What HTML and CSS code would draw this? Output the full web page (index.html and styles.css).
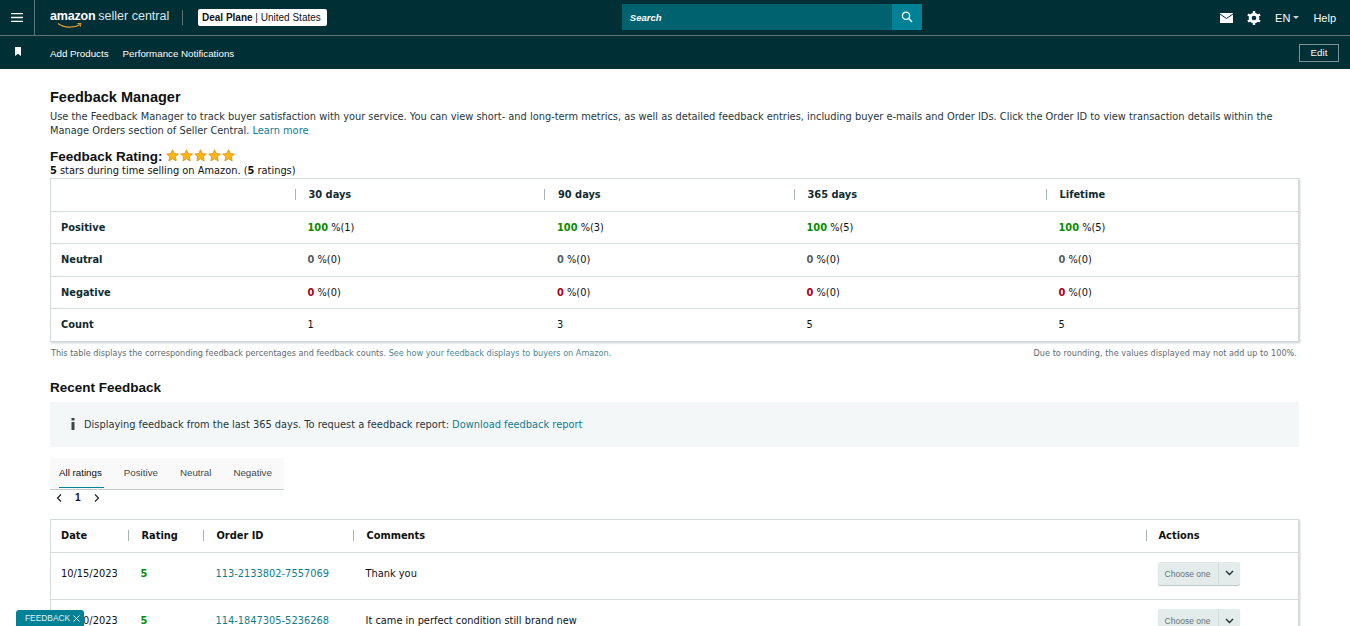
FILE: index.html
```html
<!DOCTYPE html>
<html lang="en">
<head>
    <meta charset="UTF-8">
    <meta name="viewport" content="width=device-width, initial-scale=1.0">
    <title>Feedback Manager</title>
    <link rel="stylesheet" href="styles.css">
</head>
<body>
    <svg class="defs" width="0" height="0">
        <symbol id="star" viewBox="0 0 14 14"><path d="M7 .8l1.900 4.100 4.500.5-3.300 3 .9 4.400L7 10.600l-3.900 2.200.9-4.400-3.300-3 4.500-.5z" fill="#fdb515" stroke="#d98a0c" stroke-width=".8"/></symbol>
        <symbol id="chev" viewBox="0 0 9 6"><path d="M1 1l3.500 3.500L8 1" fill="none" stroke="#1c3036" stroke-width="1.400"/></symbol>
    </svg>
    <header class="topbar">
        <div class="menu-cell">
            <svg width="12" height="9" viewBox="0 0 12 9"><path d="M0 .7h12M0 4.500h12M0 8.300h12" stroke="#fff" stroke-width="1.300"/></svg>
        </div>
        <div class="logo">
            <span class="logo-amazon">amazon</span><span class="logo-rest">seller central</span>
            <svg class="logo-smile" width="26" height="7" viewBox="0 0 26 7"><path d="M1 1.500C7 6 17 6.500 23 2.500" fill="none" stroke="#e79b2d" stroke-width="1.300"/><path d="M20.500 1.500l3.500 0-.8 3.300" fill="none" stroke="#e79b2d" stroke-width="1"/></svg>
        </div>
        <div class="logo-sep"></div>
        <div class="account"><b>Deal Plane</b> | United States</div>
        <div class="search">
            <span class="search-label">Search</span>
            <span class="search-btn">
                <svg width="12" height="12" viewBox="0 0 12 12"><circle cx="5" cy="4.800" r="3.600" fill="none" stroke="#fff" stroke-width="1.300"/><path d="M7.700 7.500L11 11" stroke="#fff" stroke-width="1.500"/></svg>
            </span>
        </div>
        <div class="top-right">
            <svg width="13" height="10" viewBox="0 0 13 10"><path d="M0 0h13v10H0z" fill="#fff"/><path d="M0 1l6.500 4.500L13 1" fill="none" stroke="#002f36" stroke-width="1"/></svg>
            <svg width="14" height="14" viewBox="0 0 14 14"><circle cx="7" cy="7" r="3.800" fill="none" stroke="#fff" stroke-width="3"/><path d="M7 0v14M.9 3.500l12.200 7M.9 10.500l12.200-7" stroke="#fff" stroke-width="2.400" stroke-dasharray="2.500 9 2.500"/></svg>
            <span class="lang">EN <i class="caret"></i></span>
            <span class="help">Help</span>
        </div>
    </header>
    <nav class="subbar">
        <svg class="bookmark" width="6" height="9" viewBox="0 0 6 9"><path d="M0 0h6v9L3 6.800 0 9z" fill="#fff"/></svg>
        <a>Add Products</a>
        <a>Performance Notifications</a>
        <button class="edit">Edit</button>
    </nav>

    <main class="content">
        <h1>Feedback Manager</h1>
        <p class="intro">Use the Feedback Manager to track buyer satisfaction with your service. You can view short- and long-term metrics, as well as detailed feedback entries, including buyer e-mails and Order IDs. Click the Order ID to view transaction details within the Manage Orders section of Seller Central. <a>Learn more</a></p>

        <div class="rating-head">
            <h2>Feedback Rating:</h2>
            <span class="stars">
                <svg><use href="#star"/></svg><svg><use href="#star"/></svg><svg><use href="#star"/></svg><svg><use href="#star"/></svg><svg><use href="#star"/></svg>
            </span>
        </div>
        <p class="rating-sub"><b>5</b> stars during time selling on Amazon. (<b>5</b> ratings)</p>

        <table class="metrics">
            <colgroup>
                <col class="c-label"><col class="c-30"><col class="c-90"><col class="c-365"><col>
            </colgroup>
            <thead>
                <tr>
                    <th></th>
                    <th><span class="th-sep">30 days</span></th>
                    <th><span class="th-sep">90 days</span></th>
                    <th><span class="th-sep">365 days</span></th>
                    <th><span class="th-sep">Lifetime</span></th>
                </tr>
            </thead>
            <tbody>
                <tr>
                    <th>Positive</th>
                    <td><b class="green">100</b> %(1)</td>
                    <td><b class="green">100</b> %(3)</td>
                    <td><b class="green">100</b> %(5)</td>
                    <td><b class="green">100</b> %(5)</td>
                </tr>
                <tr>
                    <th>Neutral</th>
                    <td><b class="grey">0</b> %(0)</td>
                    <td><b class="grey">0</b> %(0)</td>
                    <td><b class="grey">0</b> %(0)</td>
                    <td><b class="grey">0</b> %(0)</td>
                </tr>
                <tr>
                    <th>Negative</th>
                    <td><b class="red">0</b> %(0)</td>
                    <td><b class="red">0</b> %(0)</td>
                    <td><b class="red">0</b> %(0)</td>
                    <td><b class="red">0</b> %(0)</td>
                </tr>
                <tr>
                    <th>Count</th>
                    <td>1</td>
                    <td>3</td>
                    <td>5</td>
                    <td>5</td>
                </tr>
            </tbody>
        </table>
        <div class="table-notes">
            <span>This table displays the corresponding feedback percentages and feedback counts. <a>See how your feedback displays to buyers on Amazon.</a></span>
            <span>Due to rounding, the values displayed may not add up to 100%.</span>
        </div>

        <h2 class="recent">Recent Feedback</h2>
        <div class="notice">
            <svg width="4" height="12" viewBox="0 0 4 12"><path d="M0.500 0h3v2.500h-3zM0.500 4h3v8h-3z" fill="#39474a"/></svg>
            <span>Displaying feedback from the last 365 days. To request a feedback report: <a>Download feedback report</a></span>
        </div>

        <div class="tabs">
            <span class="tab active">All ratings</span>
            <span class="tab">Positive</span>
            <span class="tab">Neutral</span>
            <span class="tab">Negative</span>
        </div>
        <div class="pager">
            <svg width="6" height="8" viewBox="0 0 6 8"><path d="M5 .5L1.500 4 5 7.500" fill="none" stroke="#222" stroke-width="1.200"/></svg>
            <b>1</b>
            <svg width="6" height="8" viewBox="0 0 6 8"><path d="M1 .5L4.500 4 1 7.500" fill="none" stroke="#222" stroke-width="1.200"/></svg>
        </div>

        <table class="entries">
            <colgroup>
                <col class="c-date"><col class="c-rating"><col class="c-order"><col><col class="c-actions">
            </colgroup>
            <thead>
                <tr>
                    <th>Date</th>
                    <th><span class="th-sep">Rating</span></th>
                    <th><span class="th-sep">Order ID</span></th>
                    <th><span class="th-sep">Comments</span></th>
                    <th class="actions"><span class="th-sep">Actions</span></th>
                </tr>
            </thead>
            <tbody>
                <tr>
                    <td>10/15/2023</td>
                    <td><b class="green">5</b></td>
                    <td><a>113-2133802-7557069</a></td>
                    <td>Thank you</td>
                    <td class="actions">
                        <div class="choose"><span>Choose one</span><i><svg width="9" height="6"><use href="#chev"/></svg></i></div>
                    </td>
                </tr>
                <tr>
                    <td>10/10/2023</td>
                    <td><b class="green">5</b></td>
                    <td><a>114-1847305-5236268</a></td>
                    <td>It came in perfect condition still brand new</td>
                    <td class="actions">
                        <div class="choose"><span>Choose one</span><i><svg width="9" height="6"><use href="#chev"/></svg></i></div>
                    </td>
                </tr>
            </tbody>
        </table>
    </main>

    <div class="feedback-tab">FEEDBACK
        <svg width="7" height="7" viewBox="0 0 7 7"><path d="M.5.5l6 6M6.500.5l-6 6" stroke="#e3f1f3" stroke-width="1"/></svg>
    </div>
</body>
</html>
```

FILE: styles.css
```css
html, body {
    height: 626px;
    overflow: hidden;
}
body {
    margin: 0;
    font-family: "DejaVu Sans", Verdana, sans-serif;
    font-size: 9.830px;
    color: #0f1111;
    background: #fff;
}
a {
    color: #0f7c8f;
}
.defs {
    display: block;
}

.topbar {
    display: flex;
    align-items: center;
    height: 35px;
    background: #002f36;
    border-bottom: 1px solid #5c7478;
    font-family: "Liberation Sans", Arial, sans-serif;
    color: #fff;
}
.menu-cell {
    display: flex;
    align-items: center;
    justify-content: center;
    width: 35px;
    height: 35px;
    border-right: 1px solid #5c7478;
    box-sizing: border-box;
}
.logo {
    position: relative;
    margin-left: 15px;
    width: 119px;
    font-size: 12.500px;
    line-height: 15px;
    margin-top: -3px;
    white-space: nowrap;
}
.logo-amazon {
    font-weight: bold;
    letter-spacing: -0.2px;
}
.logo-rest {
    margin-left: 3px;
    color: #dfe6e7;
}
.logo-smile {
    position: absolute;
    left: 7px;
    top: 13px;
}
.logo-sep {
    width: 1px;
    height: 15px;
    margin-left: 13px;
    background: #5c7478;
}
.account {
    margin-left: 15px;
    height: 17px;
    line-height: 17px;
    padding: 0 6px 0 4px;
    background: #fff;
    color: #0f1111;
    font-size: 10px;
    border-radius: 2px;
    white-space: nowrap;
}
.search {
    display: flex;
    align-items: stretch;
    justify-content: space-between;
    width: 300px;
    height: 26px;
    margin: -1px 0 0 295px;
    background: #00626f;
}
.search-label {
    align-self: center;
    padding-left: 8px;
    font-size: 9.500px;
    font-style: italic;
    font-weight: bold;
}
.search-btn {
    display: flex;
    align-items: center;
    justify-content: center;
    width: 30px;
    background: #008296;
}
.top-right {
    display: flex;
    align-items: center;
    gap: 14px;
    margin-left: auto;
    padding-right: 14px;
    font-size: 11px;
}
.lang {
    display: flex;
    align-items: center;
    gap: 3px;
}
.caret {
    width: 0;
    height: 0;
    border-left: 3px solid transparent;
    border-right: 3px solid transparent;
    border-top: 3px solid #ccd6d8;
}

.subbar {
    display: flex;
    align-items: center;
    height: 32px;
    padding: 1px 11px 0 15px;
    background: #002f36;
    font-family: "Liberation Sans", Arial, sans-serif;
    font-size: 9.750px;
    color: #fff;
}
.subbar a {
    color: #fff;
    margin-right: 14px;
}
.bookmark {
    margin-right: 29px;
    margin-top: -3px;
}
.edit {
    margin: -1px 0 0 auto;
    width: 40px;
    height: 18px;
    padding: 0;
    background: transparent;
    border: 1px solid #7d9094;
    color: #fff;
    font-family: inherit;
    font-size: 9.750px;
}

.content {
    padding: 0 51px 0 50px;
}
h1 {
    margin: 20px 0 0;
    font-family: "Liberation Sans", Arial, sans-serif;
    font-size: 14.500px;
    line-height: 16px;
    color: #0f1111;
}
.intro {
    margin: 5px 0 0;
    line-height: 14px;
    color: #26363a;
}
.rating-head {
    display: flex;
    align-items: center;
    gap: 3px;
    margin-top: 10px;
    height: 16px;
}
h2 {
    margin: 0;
    font-family: "Liberation Sans", Arial, sans-serif;
    font-size: 13.500px;
    color: #0f1111;
}
.stars {
    display: flex;
    gap: 1px;
    margin-top: -1px;
}
.stars svg {
    width: 13px;
    height: 13px;
}
.rating-sub {
    margin: 0;
    line-height: 13px;
}

table {
    width: 100%;
    table-layout: fixed;
    border-collapse: collapse;
    border: 1px solid #d5dbdb;
    box-shadow: 1px 1px 2px #c5cccc;
}
th, td {
    padding: 0 11px 0 12px;
    text-align: left;
    font-size: 9.830px;
    border-bottom: 1px solid #d5dbdb;
}
thead th .th-sep {
    display: block;
    margin-left: -13px;
    padding-left: 13px;
    border-left: 1px solid #a7b2b3;
}

.metrics {
    margin-top: 1px;
}
.metrics tr {
    height: 32.500px;
}
.metrics tbody th, .metrics thead th {
    color: #0f2b30;
}
.metrics tbody th {
    padding-left: 10px;
}
.c-label {
    width: 245px;
}
.c-30, .c-90 {
    width: 249.500px;
}
.c-365 {
    width: 252px;
}
.green {
    color: #078c00;
}
.grey {
    color: #555f60;
}
.red {
    color: #a8001c;
}
.table-notes {
    display: flex;
    justify-content: space-between;
    margin-top: 6px;
    padding: 0 2px 0 1px;
    font-size: 8.150px;
    line-height: 10px;
    color: #5e6b6e;
}
.table-notes span + span {
    letter-spacing: 0.04px;
}
.table-notes a {
    color: #4a8793;
}

.recent {
    margin-top: 22px;
    line-height: 16px;
}
.notice {
    display: flex;
    align-items: center;
    gap: 9px;
    height: 45px;
    margin-top: 6px;
    padding-left: 21px;
    background: #f4f7f7;
    color: #26363a;
}
.tabs {
    display: flex;
    width: 234px;
    height: 32px;
    margin-top: 11px;
    padding-left: 9px;
    box-sizing: border-box;
    background: #f9f9f9;
    border-bottom: 1px solid #c4cbcc;
    font-family: "Liberation Sans", Arial, sans-serif;
    font-size: 9.750px;
    gap: 22px;
}
.tab {
    line-height: 30px;
    height: 29px;
    color: #3c4a4d;
}
.tab.active {
    color: #0f1111;
    border-bottom: 1px solid #008296;
    padding-right: 2px;
    margin-right: -2px;
}
.pager {
    display: flex;
    align-items: center;
    gap: 13px;
    height: 14px;
    padding: 1px 0 0 6px;
    font-family: "Liberation Sans", Arial, sans-serif;
    font-size: 10px;
    line-height: 14px;
}

.entries {
    margin-top: 14px;
}
.entries th:first-child, .entries td:first-child {
    padding-left: 10px;
}
.entries th.actions, .entries td.actions {
    padding-left: 11px;
}
.entries th.actions .th-sep {
    margin-left: -12px;
    padding-left: 12px;
}
.entries thead tr {
    height: 33px;
}
.entries tbody tr {
    height: 47.500px;
}
.entries tbody td {
    vertical-align: top;
    padding-top: 9px;
    line-height: 23px;
}
.c-date {
    width: 78px;
}
.c-rating {
    width: 75px;
}
.c-order {
    width: 150px;
}
.c-actions {
    width: 152px;
}
.choose {
    display: flex;
    width: 82px;
    height: 23px;
    background: #e3ebeb;
    border-radius: 2px;
    box-shadow: 0 1px 1px #bcc6c6;
    color: #667579;
    font-family: "Liberation Sans", Arial, sans-serif;
    font-size: 8.500px;
}
.choose span {
    flex: 1;
    line-height: 24px;
    text-align: center;
}
.choose i {
    display: flex;
    align-items: center;
    justify-content: center;
    width: 21px;
    border-left: 1px solid #d5dddd;
}

.feedback-tab {
    position: fixed;
    left: 16px;
    bottom: 0;
    width: 68px;
    height: 16px;
    padding-left: 9px;
    box-sizing: border-box;
    background: #008296;
    border-radius: 3px 3px 0 0;
    color: #e3f1f3;
    font-family: "Liberation Sans", Arial, sans-serif;
    font-size: 8.400px;
    line-height: 16px;
    white-space: nowrap;
}
.feedback-tab svg {
    margin-left: 1px;
    vertical-align: -1px;
}
```
